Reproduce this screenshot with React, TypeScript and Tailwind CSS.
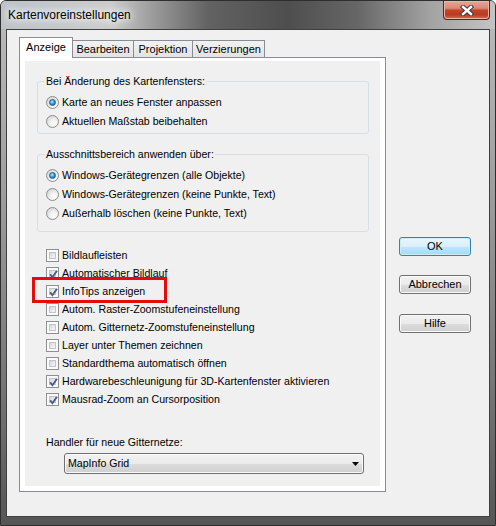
import React from "react";

function Radio({ checked }: { checked?: boolean }) {
  return (
    <span className="w-[13px] h-[13px] shrink-0 rounded-full border border-[#8d8d8d] bg-[radial-gradient(circle_at_65%_70%,#ffffff_0%,#f3f3f3_35%,#d6d6d6_80%,#c8c8c8_100%)] flex items-center justify-center">
      {checked && (
        <span className="w-[7px] h-[7px] rounded-full border border-[#1b5a8e] bg-[radial-gradient(circle_at_40%_35%,#c6ecff_0%,#3ba0e6_45%,#0f5a9c_100%)]" />
      )}
    </span>
  );
}

function Check({ checked }: { checked?: boolean }) {
  return (
    <span className="relative w-[13px] h-[13px] shrink-0 border border-[#8e8f8f] bg-[#fbfbfb] p-[2px] flex">
      <span className="flex-1 border border-[#c2c5ca] bg-[linear-gradient(135deg,#d3d5d8_0%,#e9eaeb_55%,#f7f7f7_100%)]" />
      {checked && (
        <svg className="absolute left-[1px] top-[1px]" width="11" height="11" viewBox="0 0 11 11">
          <path d="M2.2 5.3 L4.4 8.2 L9 1.8" fill="none" stroke="#4a5b93" strokeWidth="1.9" strokeLinejoin="miter" />
        </svg>
      )}
    </span>
  );
}

function Btn({ label, def }: { label: string; def?: boolean }) {
  return (
    <div
      className={
        def
          ? "w-[72px] h-[19px] rounded-[3px] border border-[#3c7fb1] bg-[linear-gradient(to_bottom,#eaf6fd_0%,#d9f0fc_50%,#bee6fd_51%,#a7d9f5_100%)] flex items-center justify-center shadow-[inset_0_0_0_1px_#c7ecfc]"
          : "w-[72px] h-[19px] rounded-[3px] border border-[#707070] bg-[linear-gradient(to_bottom,#f2f2f2_0%,#ebebeb_50%,#dddddd_51%,#cfcfcf_100%)] flex items-center justify-center shadow-[inset_0_0_0_1px_#fafafa]"
      }
    >
      {label}
    </div>
  );
}

const radios1 = [
  { t: "Karte an neues Fenster anpassen", c: true },
  { t: "Aktuellen Maßstab beibehalten", c: false },
];
const radios2 = [
  { t: "Windows-Gerätegrenzen (alle Objekte)", c: true },
  { t: "Windows-Gerätegrenzen (keine Punkte, Text)", c: false },
  { t: "Außerhalb löschen (keine Punkte, Text)", c: false },
];
const checks = [
  { t: "Bildlaufleisten", c: false },
  { t: "Automatischer Bildlauf", c: true },
  { t: "InfoTips anzeigen", c: true },
  { t: "Autom. Raster-Zoomstufeneinstellung", c: false },
  { t: "Autom. Gitternetz-Zoomstufeneinstellung", c: false },
  { t: "Layer unter Themen zeichnen", c: false },
  { t: "Standardthema automatisch öffnen", c: false },
  { t: "Hardwarebeschleunigung für 3D-Kartenfenster aktivieren", c: true },
  { t: "Mausrad-Zoom an Cursorposition", c: true },
];

export default function App() {
  return (
    <div className="w-[496px] h-[526px] flex flex-col border border-[#2e2e2e] rounded-t-[6px] overflow-hidden font-['Liberation_Sans',Arial,sans-serif] text-[10.6px] leading-[13px] text-black bg-[linear-gradient(to_bottom,#bdbdbd_0%,#9a9a9a_40%,#6e6e6e_80%,#555555_100%)]">
      {/* title bar */}
      <div className="h-[28px] shrink-0 flex justify-between items-start bg-[linear-gradient(to_right,#bcc3c9_0%,#cdcdcd_22%,#9a9a9a_31%,#626262_42%,#4e4e4e_58%,#666666_72%,#a3a3a3_87%,#c4c4c4_100%)]">
        <span className="pl-[7px] pt-[7px] text-[12px] leading-[14px] [text-shadow:0_0_6px_#fff,0_0_10px_#fff,0_0_14px_#fff]">
          Kartenvoreinstellungen
        </span>
        <div className="mr-[5px] w-[47px] h-[19px] rounded-b-[4px] border border-t-0 border-[#4b2a22] bg-[linear-gradient(to_bottom,#e6a697_0%,#d98a77_40%,#c2432a_52%,#bd3a22_75%,#d9684f_100%)] shadow-[inset_0_0_0_1px_#f0b4a6] flex items-center justify-center">
          <svg width="14" height="11" viewBox="0 0 14 11">
            <path d="M3 2 L11 9 M11 2 L3 9" stroke="#3d3d3d" strokeWidth="4.4" strokeLinecap="square" />
            <path d="M3 2 L11 9 M11 2 L3 9" stroke="#ffffff" strokeWidth="2.4" strokeLinecap="square" />
          </svg>
        </div>
      </div>

      {/* body with frame */}
      <div className="flex-1 px-[5px] pb-[8px] flex">
        <div className="flex-1 border border-[#404040] bg-[#f0f0f0] flex">
          {/* tab control */}
          <div className="pl-[12px] pt-[7px] flex flex-col">
            <div className="flex items-end h-[21px] text-[11px]">
              <div className="relative z-10 w-[54px] h-[21px] border border-b-0 border-[#898c95] bg-white flex items-start justify-center pt-[3px]">
                Anzeige
              </div>
              <div className="w-[61px] h-[18px] border border-l-0 border-[#898c95] bg-[linear-gradient(to_bottom,#f2f2f2,#e3e3e3)] flex items-center justify-center">
                Bearbeiten
              </div>
              <div className="w-[59px] h-[18px] border border-l-0 border-[#898c95] bg-[linear-gradient(to_bottom,#f2f2f2,#e3e3e3)] flex items-center justify-center">
                Projektion
              </div>
              <div className="w-[72px] h-[18px] border border-l-0 border-[#898c95] bg-[linear-gradient(to_bottom,#f2f2f2,#e3e3e3)] flex items-center justify-center">
                Verzierungen
              </div>
            </div>
            <div className="-mt-px w-[367px] h-[435px] border border-[#898c95] bg-white pt-[3px] px-[5px] pb-[5px] flex">
              <div className="flex-1 bg-[#f0f0f0] flex flex-col">
                <fieldset className="mt-[14px] ml-[12px] w-[332px] border border-[#d5dfe5] rounded-[3px] pt-[5px] pl-[8px] pb-[2px]">
                  <legend className="-ml-px px-[1px] leading-[13px]">Bei Änderung des Kartenfensters:</legend>
                  {radios1.map((r) => (
                    <div key={r.t} className="h-[19px] flex items-center gap-[3px]">
                      <Radio checked={r.c} />
                      <span>{r.t}</span>
                    </div>
                  ))}
                </fieldset>
                <fieldset className="mt-[14px] ml-[12px] w-[332px] border border-[#d5dfe5] rounded-[3px] pt-[5px] pl-[8px] pb-[8px]">
                  <legend className="-ml-px px-[1px] leading-[13px]">Ausschnittsbereich anwenden über:</legend>
                  {radios2.map((r) => (
                    <div key={r.t} className="h-[19px] flex items-center gap-[3px]">
                      <Radio checked={r.c} />
                      <span>{r.t}</span>
                    </div>
                  ))}
                </fieldset>
                <div className="relative mt-[14px] pl-[21px] flex flex-col">
                  {checks.map((r) => (
                    <div key={r.t} className="h-[18px] flex items-center gap-[3px]">
                      <Check checked={r.c} />
                      <span>{r.t}</span>
                    </div>
                  ))}
                  <div className="absolute left-[7px] top-[31px] w-[135px] h-[26px] border-[3px] border-[#e50b0b]" />
                </div>
                <div className="mt-[28px] pl-[21px]">Handler für neue Gitternetze:</div>
                <div className="mt-[4px] ml-[39px] w-[300px] h-[21px] rounded-[3px] border border-[#707070] bg-[linear-gradient(to_bottom,#f2f2f2_0%,#ebebeb_50%,#dddddd_51%,#cfcfcf_100%)] shadow-[inset_0_0_0_1px_#fafafa] flex items-center justify-between pl-[3px] pr-[4px]">
                  <span>MapInfo Grid</span>
                  <svg width="7" height="4" viewBox="0 0 7 4">
                    <path d="M0 0 H7 L3.5 4 Z" fill="#000" />
                  </svg>
                </div>
              </div>
            </div>
          </div>

          {/* buttons */}
          <div className="ml-[13px] pt-[207px] flex flex-col text-[11px]">
            <Btn label="OK" def />
            <div className="mt-[19px]">
              <Btn label="Abbrechen" />
            </div>
            <div className="mt-[20px]">
              <Btn label="Hilfe" />
            </div>
          </div>
        </div>
      </div>
    </div>
  );
}
